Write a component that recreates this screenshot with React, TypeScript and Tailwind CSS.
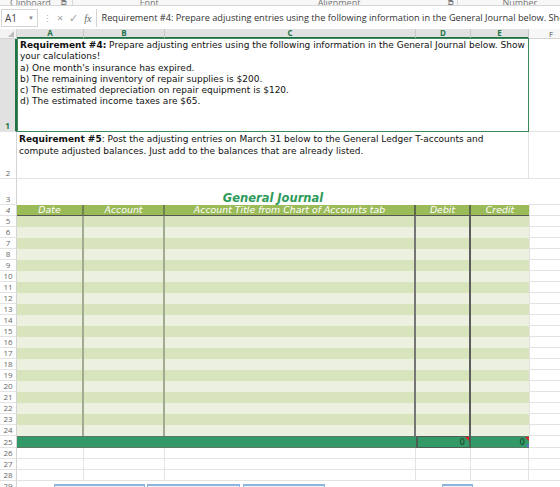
import React from "react";

const grid = "grid grid-cols-[17px_67px_81px_251px_55px_58px_1fr]";
const body = "font-['DejaVu_Sans',sans-serif]";
const ui = "font-['Open_Sans',sans-serif]";

const RowHead = ({ n, active }: { n: number | string; active?: boolean }) => (
  <div
    className={`flex items-end justify-center border-b border-[#e3e3e3] pb-[1px] text-[8px] leading-none ${ui} ${
      active ? "border-r-2 border-r-[#217346] bg-[#e1e1e1] text-[#217346] font-bold" : "border-r border-r-[#d4d4d4] bg-white text-[#666]"
    }`}
  >
    {n}
  </div>
);

const JournalRow = ({ n }: { n: number }) => {
  const bg = n % 2 === 1 ? "bg-[#d8e4bc]" : "bg-[#ebf1de]";
  return (
    <div className={`${grid} h-[11px]`}>
      <RowHead n={n} />
      <div className={`${bg} border-r-2 border-r-[#a0ab92]`} />
      <div className={`${bg} border-r-2 border-r-[#a0ab92]`} />
      <div className={`${bg} border-r-2 border-r-[#767676]`} />
      <div className={`${bg} border-r-2 border-r-[#5c5c5c]`} />
      <div className={`${bg}`} />
      <div className="border-b border-l border-[#e3e3e3]" />
    </div>
  );
};

const BlankRow = ({ n }: { n: number }) => (
  <div className={`${grid} h-[11px]`}>
    <RowHead n={n} />
    {[0, 1, 2, 3, 4].map((i) => (
      <div key={i} className="border-b border-r border-[#e3e3e3]" />
    ))}
    <div className="border-b border-[#e3e3e3]" />
  </div>
);

const Corner = () => (
  <span className="absolute right-0 top-0 h-0 w-0 border-l-[4px] border-t-[4px] border-l-transparent border-t-[#e02020]" />
);

export default function App() {
  const journal = Array.from({ length: 20 }, (_, i) => i + 5);
  return (
    <div className="h-[487px] w-[560px] overflow-hidden bg-white">
      {/* ribbon group labels, cut off */}
      <div className={`relative h-[6px] overflow-hidden border-b border-[#d6d6d6] bg-[#f7f7f7] text-[9px] text-[#777] ${ui}`}>
        <div className="flex h-full items-end">
          <span className="ml-[10px] -mb-[4px]">Clipboard</span>
          <span className="ml-[10px] -mb-[4px] text-[8px]">⧉</span>
          <span className="ml-[5px] h-full border-l border-[#d6d6d6]" />
          <span className="ml-[67px] -mb-[4px]">Font</span>
          <span className="ml-[159px] -mb-[4px]">Alignment</span>
          <span className="ml-[88px] -mb-[4px] text-[8px]">⧉</span>
          <span className="ml-[3px] h-full border-l border-[#d6d6d6]" />
          <span className="ml-[44px] -mb-[4px]">Number</span>
        </div>
      </div>

      {/* formula bar */}
      <div className={`mt-[3px] flex h-[18px] items-center ${ui} text-[#444]`}>
        <div className="ml-[1px] flex h-full w-[37px] items-center justify-between border border-[#d4d4d4] bg-white px-[3px] text-[10px]">
          <span>A1</span>
          <span className="text-[6px] text-[#888]">▼</span>
        </div>
        <span className="ml-[5px] text-[9px] leading-none text-[#aaa]">⋮</span>
        <div className="ml-[5px] flex items-center gap-[6px] text-[11px] text-[#a0a0a0]">
          <span>×</span>
          <span>✓</span>
          <span className="font-['Liberation_Serif',serif] text-[10px] italic text-[#666]">fx</span>
        </div>
        <div className="ml-[4px] flex h-full flex-1 items-center overflow-hidden whitespace-nowrap border-l border-[#d4d4d4] pl-[5px] text-[9.2px] text-[#333]">
          Requirement #4: Prepare adjusting entries using the following information in the General Journal below. Show your calculations!
        </div>
      </div>

      {/* column headers */}
      <div className={`${grid} mt-[2px] h-[9px] text-[8px] leading-none ${ui}`}>
        <div className="relative border-b border-r border-[#d4d4d4] bg-[#f3f3f3]">
          <span className="absolute bottom-[1px] right-[2px] h-0 w-0 border-b-[6px] border-l-[6px] border-b-[#bcbcbc] border-l-transparent" />
        </div>
        {["A", "B", "C", "D", "E"].map((c) => (
          <div key={c} className="flex items-center justify-center border-b-2 border-r border-b-[#217346] border-r-[#c6c6c6] bg-[#e1e1e1] font-bold text-[#217346]">
            {c}
          </div>
        ))}
        <div className="flex items-center justify-start border-b border-[#d4d4d4] bg-[#f7f7f7] pl-[20px] text-[#555]">F</div>
      </div>

      {/* row 1 */}
      <div className={`${grid} h-[94px]`}>
        <RowHead n={1} active />
        <div className={`col-span-5 whitespace-nowrap border border-[#3c8a5a] px-[2px] pt-[1px] text-[9px] leading-[11.3px] text-[#111] ${body}`}>
          <div>
            <b>Requirement #4:</b> Prepare adjusting entries using the following information in the General Journal below. Show
          </div>
          <div>your calculations!</div>
          <div>a) One month's insurance has expired.</div>
          <div>b) The remaining inventory of repair supplies is $200.</div>
          <div>c) The estimated depreciation on repair equipment is $120.</div>
          <div>d) The estimated income taxes are $65.</div>
        </div>
        <div className="border-b border-[#e3e3e3]" />
      </div>

      {/* row 2 */}
      <div className={`${grid} h-[47px]`}>
        <RowHead n={2} />
        <div className={`col-span-5 whitespace-nowrap border-b border-r border-[#e3e3e3] px-[2px] pt-[1px] text-[9px] leading-[12px] text-[#111] ${body}`}>
          <div>
            <b>Requirement #5</b>: Post the adjusting entries on March 31 below to the General Ledger T-accounts and
          </div>
          <div>compute adjusted balances. Just add to the balances that are already listed.</div>
        </div>
        <div className="border-b border-[#e3e3e3]" />
      </div>

      {/* row 3 */}
      <div className={`${grid} h-[26px]`}>
        <RowHead n={3} />
        <div className={`col-span-5 flex items-end justify-center pb-[1px] text-[11.5px] font-bold italic leading-none text-[#2e9a5a] ${body}`}>
          General Journal
        </div>
        <div className="border-b border-[#e3e3e3]" />
      </div>

      {/* row 4 header */}
      <div className={`${grid} h-[11px] whitespace-nowrap text-[9.4px] italic leading-none text-white ${body}`}>
        <RowHead n={4} />
        {[
          ["Date", "border-r-[#6f8250]"],
          ["Account", "border-r-[#6f8250]"],
          ["Account Title from Chart of Accounts tab", "border-r-[#5f6a4c]"],
          ["Debit", "border-r-[#5f6a4c]"],
        ].map(([t, b]) => (
          <div key={t} className={`flex items-center justify-center border-b border-r-2 border-b-[#555] bg-[#9bbb59] ${b}`}>
            {t}
          </div>
        ))}
        <div className="flex items-center justify-center border-b border-b-[#555] bg-[#9bbb59]">Credit</div>
        <div className="border-b border-l border-[#e3e3e3]" />
      </div>

      {journal.map((n) => (
        <JournalRow key={n} n={n} />
      ))}

      {/* row 25 totals */}
      <div className={`${grid} h-[12px] text-[8.6px] leading-none text-[#1d3b2a] ${body}`}>
        <RowHead n={25} />
        <div className="col-span-3 border-y border-[#5b7a66] bg-[#339966]" />
        <div className="relative flex items-center justify-end border-y border-x-2 border-[#4d5f54] bg-[#339966] pr-[4px]">
          0
          <Corner />
        </div>
        <div className="relative flex items-center justify-end border-y border-[#5b7a66] bg-[#339966] pr-[4px]">
          0
          <Corner />
          <span className="absolute bottom-0 right-0 h-[3px] w-[2px] bg-[#5b6fd6]" />
        </div>
        <div className="border-b border-[#e3e3e3]" />
      </div>

      {[26, 27, 28].map((n) => (
        <BlankRow key={n} n={n} />
      ))}

      {/* row 29, cut off, with tops of objects below */}
      <div className={`${grid} h-[11px]`}>
        <RowHead n={29} />
        <div className="col-span-6 flex items-start">
          <div className="mt-[3px] ml-[37px] h-[3px] w-[91px] border-t-2 border-x border-[#8fb4de] bg-[#f0f5fb]" />
          <div className="mt-[3px] ml-[2px] h-[3px] w-[93px] border-t-2 border-x border-[#8fb4de] bg-[#f0f5fb]" />
          <div className="mt-[3px] ml-[3px] h-[3px] w-[82px] border-t-2 border-x border-[#8fb4de] bg-[#f0f5fb]" />
          <div className="mt-[3px] ml-[117px] h-[3px] w-[31px] border-t-2 border-x border-[#8fb4de] bg-[#f0f5fb]" />
        </div>
      </div>
    </div>
  );
}
